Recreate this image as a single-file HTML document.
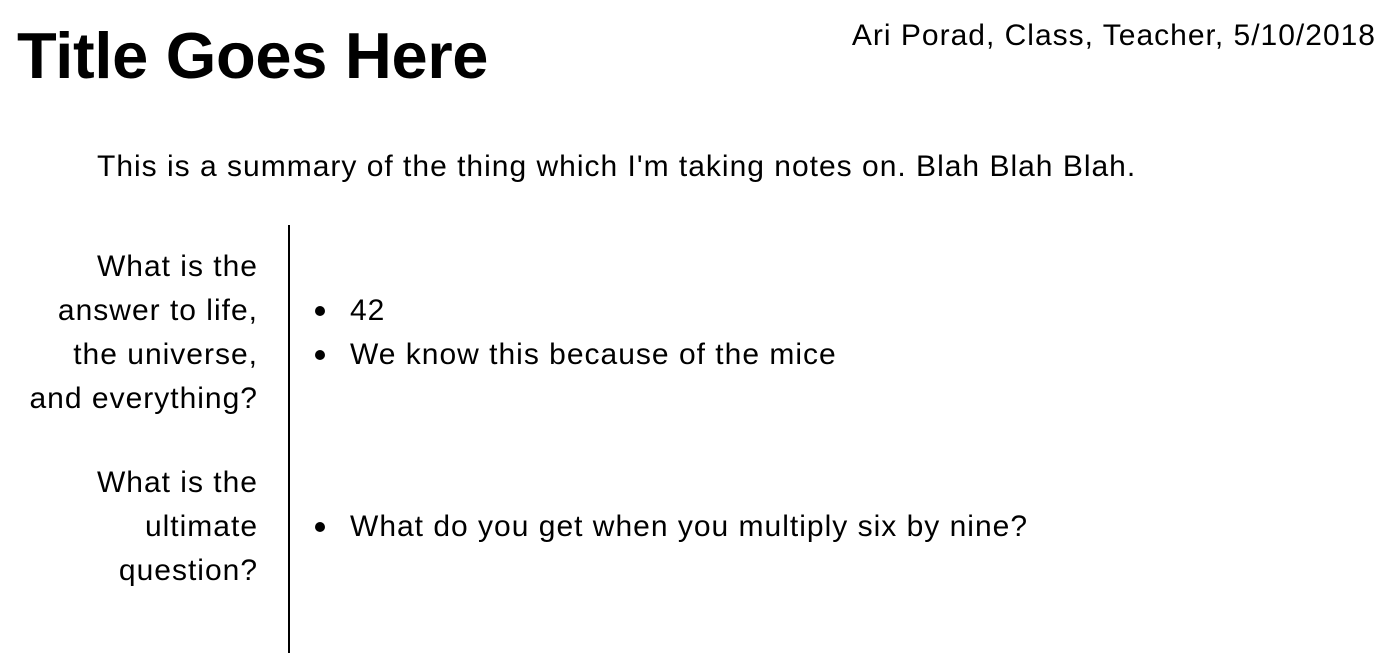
<!DOCTYPE html>
<html><head><style>
body{margin:0;width:1390px;height:668px;background:#fff;color:#000;font-family:"Liberation Sans",sans-serif;position:relative;overflow:hidden}
.a{position:absolute;white-space:nowrap}
h1{position:absolute;margin:0;left:17px;top:18px;font-size:65px;font-weight:bold;line-height:76px;letter-spacing:-0.3px}
.t{font-size:30px;line-height:44px;letter-spacing:1px}
.r{text-align:right;right:1132px}
.vl{position:absolute;left:288px;top:225px;width:2px;height:428px;background:#000}
.b{position:absolute;left:315px;width:10px;height:10px;border-radius:50%;background:#000}
</style></head><body>
<h1>Title Goes Here</h1>
<div class="a t" style="right:14px;top:14px">Ari Porad, Class, Teacher, 5/10/2018</div>
<div class="a t" style="left:97px;top:145px">This is a summary of the thing which I'm taking notes on. Blah Blah Blah.</div>
<div class="vl"></div>
<div class="a t r" style="top:245px">What is the<br>answer to life,<br>the universe,<br>and everything?</div>
<div class="a t r" style="top:461px">What is the<br>ultimate<br>question?</div>
<div class="b" style="top:306px"></div>
<div class="b" style="top:350px"></div>
<div class="b" style="top:522px"></div>
<div class="a t" style="left:350px;top:289px">42</div>
<div class="a t" style="left:350px;top:333px">We know this because of the mice</div>
<div class="a t" style="left:350px;top:505px">What do you get when you multiply six by nine?</div>
</body></html>
